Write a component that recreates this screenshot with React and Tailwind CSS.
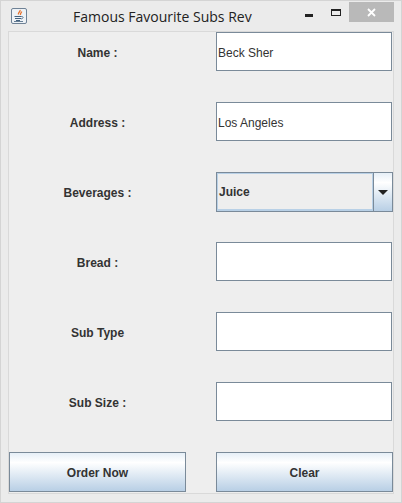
import React from 'react'

const fieldClass = "h-[39px] w-[176px] bg-white border border-[#7a8a99] pl-[1px] pt-[2px] flex items-center text-[12px] text-[#333333]"
const buttonClass = "h-[40px] w-[177px] border border-[#7a8a99] bg-gradient-to-b from-[#e6eff7] via-white via-[25%] to-[#b8cfe5] pt-[2px] flex items-center justify-center text-[12px] font-bold text-[#333333]"

function JavaIcon() {
  return (
    <svg width="16" height="16" viewBox="0 0 16 16" className="shrink-0">
      <rect x="0.5" y="0.5" width="15" height="15" rx="1.5" fill="#eef2f6" stroke="#6f8296" />
      <path d="M9 2c1 1.5-2.5 2.5-1.5 4.5M10.5 3.5c.5 1-1.5 1.5-1 3.5" fill="none" stroke="#e8702a" strokeWidth="1.3" />
      <path d="M3.5 8.5h7M4 10.5h6M5 12.5h4" fill="none" stroke="#44617e" strokeWidth="1" />
      <path d="M10.5 8.5c2.5 0 2 2-.5 2.5M3 13.5h9" fill="none" stroke="#44617e" strokeWidth="0.8" />
    </svg>
  )
}

function Row({ label, children }) {
  return (
    <div className="h-[70px] flex items-start">
      <div className="w-[177px] h-[39px] pt-[2px] flex items-center justify-center text-[12px] font-bold text-[#333333]">
        {label}
      </div>
      <div className="ml-[30px]">{children}</div>
    </div>
  )
}

export default function App() {
  return (
    <div className="w-[402px] h-[503px] bg-[#ebebeb] border border-[#d4d4d4] flex flex-col font-['Liberation_Sans',sans-serif]">
      <div className="h-[30px] shrink-0 flex items-start relative">
        <div className="ml-[10px] mt-[7px]">
          <JavaIcon />
        </div>
        <div className="ml-[46px] mt-[6px] text-[14px] leading-[20px] text-[#222222] font-['Open_Sans',sans-serif]">
          Famous Favourite Subs Rev
        </div>
        <div className="absolute left-[304px] top-[13px] w-[8px] h-[3px] bg-[#222222]"></div>
        <div className="absolute left-[330px] top-[8px] w-[10px] h-[7px] border border-t-2 border-[#222222]"></div>
        <div className="absolute left-[348px] top-[1px] w-[45px] h-[20px] bg-[#b9b9b9] flex items-center justify-center">
          <svg width="9" height="9" viewBox="0 0 9 9">
            <path d="M1 1l7 7M8 1l-7 7" stroke="white" strokeWidth="1.8" />
          </svg>
        </div>
      </div>
      <div className="ml-[7px] w-[386px] h-[463px] bg-[#eeeeee] border border-[#d9d9d9] flex flex-col">
        <Row label="Name :">
          <div className={fieldClass}>Beck Sher</div>
        </Row>
        <Row label="Address :">
          <div className={fieldClass}>Los Angeles</div>
        </Row>
        <Row label="Beverages :">
          <div className="h-[40px] w-[177px] border border-[#7a8a99] flex">
            <div className="flex-1 bg-[#eeeeee] border border-b-2 border-[#b8d0e6] flex items-center pl-[1px] text-[12px] font-bold text-[#333333]">
              Juice
            </div>
            <div className="w-[19px] border-l border-[#7a8a99] bg-gradient-to-b from-[#e6eff7] via-white via-[25%] to-[#b8cfe5] flex items-center justify-center">
              <div className="w-0 h-0 border-x-[5px] border-x-transparent border-t-[5px] border-t-[#222222]"></div>
            </div>
          </div>
        </Row>
        <Row label="Bread :">
          <div className={fieldClass}></div>
        </Row>
        <Row label="Sub Type">
          <div className={fieldClass}></div>
        </Row>
        <Row label="Sub Size :">
          <div className={fieldClass}></div>
        </Row>
        <div className="flex gap-[30px]">
          <div className={buttonClass}>Order Now</div>
          <div className={buttonClass}>Clear</div>
        </div>
      </div>
    </div>
  )
}
